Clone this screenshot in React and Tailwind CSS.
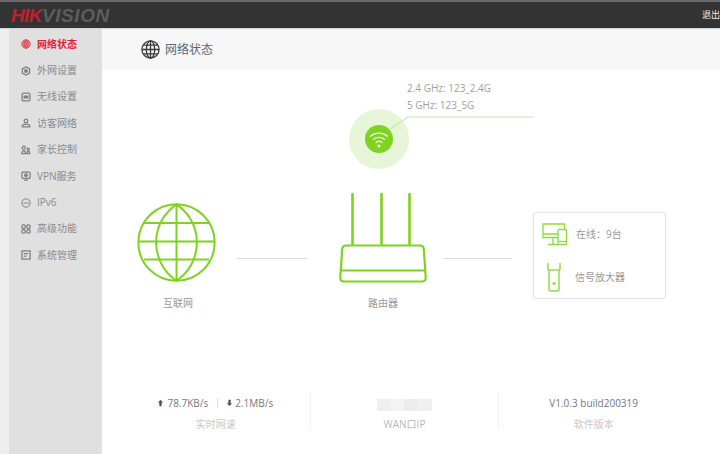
const cjk = { fontFamily: '"Open Sans", "Noto Sans CJK SC", sans-serif' };

const GREEN = "#7ed321";

function SideIcon({ name, color }) {
  const props = { fill: "none", stroke: color, strokeWidth: 1.4 };
  return (
    <svg width="10" height="10" viewBox="0 0 11 11" className="shrink-0">
      {name === "globe" && (
        <g {...props} strokeWidth="1.1">
          <circle cx="5.5" cy="5.5" r="4.6" />
          <ellipse cx="5.5" cy="5.5" rx="2.2" ry="4.6" />
          <path d="M1 5.5h9M1.6 3.3h7.8M1.6 7.7h7.8M5.5 1v9" />
        </g>
      )}
      {name === "wan" && (
        <g {...props}>
          <path d="M5.5 1l4 2.2v4.6l-4 2.2-4-2.2V3.2z" />
          <circle cx="5.5" cy="5.5" r="1.5" fill={color} />
        </g>
      )}
      {name === "wifi" && (
        <g {...props}>
          <rect x="1.2" y="1.2" width="8.6" height="8.6" rx="1.5" />
          <path d="M3.5 4.5h4v2h-4z" fill={color} />
        </g>
      )}
      {name === "guest" && (
        <g {...props}>
          <circle cx="5.5" cy="3.3" r="2" />
          <path d="M1.2 9.8c0-2.2 1.6-3 4.3-3s4.3.8 4.3 3z" />
        </g>
      )}
      {name === "parent" && (
        <g {...props}>
          <circle cx="3" cy="3" r="1.7" />
          <path d="M.9 9.6c0-2 .6-3.2 2.1-3.2s2.1 1.2 2.1 3.2z" />
          <circle cx="8" cy="4.6" r="1.2" />
          <path d="M6.4 9.6c0-1.6.4-2.6 1.6-2.6s1.6 1 1.6 2.6z" />
        </g>
      )}
      {name === "vpn" && (
        <g {...props}>
          <rect x="1" y="1.2" width="9" height="7" rx="1" />
          <circle cx="5.5" cy="4.6" r="1.4" fill={color} />
          <path d="M3.5 10h4" />
        </g>
      )}
      {name === "ipv6" && (
        <g {...props} strokeWidth="1.1">
          <circle cx="5.5" cy="5.5" r="4.6" />
          <path d="M2.6 5.5h5.8" />
        </g>
      )}
      {name === "grid" && (
        <g {...props}>
          <rect x="1" y="1" width="3.6" height="3.8" rx="1.2" />
          <rect x="6.4" y="1" width="3.6" height="3.8" rx="1.2" />
          <rect x="1" y="6.2" width="3.6" height="3.8" rx="1.2" />
          <rect x="6.4" y="6.2" width="3.6" height="3.8" rx="1.2" />
        </g>
      )}
      {name === "sys" && (
        <g {...props}>
          <rect x="1" y="1" width="9" height="9" />
          <path d="M3 4h5M3 6.8h3" />
        </g>
      )}
    </svg>
  );
}

const menu = [
  { icon: "globe", label: "网络状态", active: true },
  { icon: "wan", label: "外网设置" },
  { icon: "wifi", label: "无线设置" },
  { icon: "guest", label: "访客网络" },
  { icon: "parent", label: "家长控制" },
  { icon: "vpn", label: "VPN服务" },
  { icon: "ipv6", label: "IPv6" },
  { icon: "grid", label: "高级功能" },
  { icon: "sys", label: "系统管理" },
];

function WifiBadge() {
  return (
    <svg width="186" height="62" viewBox="0 0 186 62" className="block">
      <circle cx="30" cy="30" r="30" fill="#e7f5d8" />
      <path d="M41 20 L59 8 H185" fill="none" stroke="#cde5a6" strokeWidth="1.2" />
      <circle cx="30" cy="30" r="14" fill={GREEN} />
      <g fill="none" stroke="#fff" strokeWidth="1.3" strokeLinecap="round" opacity="0.9">
        <path d="M21.5 27.2c4.8-4 12.2-4 17 0" />
        <path d="M24.4 30.4c3.2-2.6 8-2.6 11.2 0" />
        <path d="M27 33.4c1.7-1.3 4.3-1.3 6 0" />
      </g>
      <circle cx="30" cy="37" r="1.5" fill="#fff" />
    </svg>
  );
}

function Globe() {
  return (
    <svg width="80" height="80" viewBox="0 0 80 80" className="block">
      <g fill="none" stroke={GREEN} strokeWidth="2">
        <circle cx="39.5" cy="39.5" r="38.2" />
        <path d="M39.5 1.3A46 46 0 0 0 39.5 77.7A46 46 0 0 0 39.5 1.3z" />
        <path d="M39.5 1.3V77.7M7 20h65M1.3 38.5h76.4M7 56.5h65" />
      </g>
    </svg>
  );
}

function Router() {
  return (
    <svg width="88" height="92" viewBox="0 0 88 92" className="block">
      <g fill="none" stroke={GREEN} strokeLinecap="round" strokeLinejoin="round">
        <path d="M13.5 2V52M42.5 2V52M70.5 2V52" strokeWidth="2.6" />
        <path
          d="M7 53.5Q3.5 53.5 3.2 57L1.3 85.5Q1.2 89.5 5 89.5H83Q86.8 89.5 86.7 85.5L84.8 57Q84.5 53.5 81 53.5z"
          strokeWidth="2.2"
        />
        <path d="M1.8 78.5H86.2" strokeWidth="2" />
      </g>
    </svg>
  );
}

function Devices() {
  return (
    <svg width="26" height="23" viewBox="0 0 26 23" className="block shrink-0">
      <g fill="none" stroke="#8edb3c" strokeWidth="1.3">
        <path d="M16 14.5H1V1h21.5v5" />
        <path d="M1 11h15M11 15v6M6 21.5h10" />
        <rect x="16" y="6.5" width="8.5" height="15" rx="1" />
        <path d="M16 18.5h8.5" />
      </g>
    </svg>
  );
}

function Extender() {
  return (
    <svg width="14" height="29" viewBox="0 0 14 29" className="block shrink-0">
      <g fill="none" stroke="#8edb3c" strokeWidth="1.4">
        <path d="M1 0V7M13 0V7" />
        <path d="M1 7H13" />
        <path d="M2 7V26Q2 28 4 28H10Q12 28 12 26V7" />
      </g>
      <circle cx="7" cy="20.5" r="1.6" fill="#8edb3c" />
    </svg>
  );
}

function Arrow({ down }) {
  return (
    <svg width="5" height="8" viewBox="0 0 6 8" className={down ? "rotate-180" : ""}>
      <path d="M3 0L6 3.6H4.4V8H1.6V3.6H0z" fill="#555" />
    </svg>
  );
}

export default function App() {
  return (
    <div className="flex h-[454px] w-[720px] flex-col overflow-hidden bg-white" style={cjk}>
      {/* top bar */}
      <div className="flex h-[28px] shrink-0 items-center border-t-2 border-[#6a6a6a] bg-[#333333] pl-[11px]">
        <div
          className="text-[19px] font-bold italic leading-none tracking-[-0.6px]"
          style={{ fontFamily: '"Liberation Sans", sans-serif' }}
        >
          <span className="text-[#c41f2c]">HIK</span>
          <span className="tracking-[0.6px] text-[#5d5d5f]">VISION</span>
        </div>
        <span className="ml-auto shrink-0 text-[9px] text-[#f0f0f0]">退出</span>
      </div>

      <div className="flex min-h-0 flex-1 border-t border-[#d4d4d4]">
        {/* sidebar */}
        <div className="w-[9px] shrink-0 bg-[#eeeeee]" />
        <div className="w-[93px] shrink-0 bg-[#e0e0e0] pt-[2px]">
          {menu.map((m) => (
            <div key={m.label} className="flex h-[26.4px] items-center gap-[6px] pl-[12px]">
              <SideIcon name={m.icon} color={m.active ? "#e0404a" : "#808080"} />
              <span className={`text-[10px] ${m.active ? "font-semibold text-[#e2232e]" : "text-[#8a8a8a]"}`}>
                {m.label}
              </span>
            </div>
          ))}
        </div>

        {/* main */}
        <div className="min-w-0 flex-1">
          <div className="flex h-[41px] items-center gap-[5px] bg-[#f7f7f7] pl-[39px]">
            <svg width="19" height="19" viewBox="0 0 19 19">
              <g fill="none" stroke="#3a3a3a" strokeWidth="1.3">
                <circle cx="9.5" cy="9.5" r="8.6" />
                <ellipse cx="9.5" cy="9.5" rx="4.2" ry="8.6" />
                <path d="M1 9.5h17M2.2 5.2h14.6M2.2 13.8h14.6M9.5 1v17" />
              </g>
            </svg>
            <span className="text-[12px] text-[#5a6670]">网络状态</span>
          </div>

          {/* wifi */}
          <div className="ml-[247px] w-[186px] pt-[10px]">
            <div className="pl-[58px] text-[10px] leading-[17px] text-[#a0a0a0]">
              <div>2.4 GHz: 123_2.4G</div>
              <div>5 GHz: 123_5G</div>
            </div>
            <div className="-mt-[5px]">
              <WifiBadge />
            </div>
          </div>

          {/* topology */}
          <div className="mt-[21px] flex items-start pl-[35px]">
            <div className="mt-[11px] w-[82px] text-center text-[10px] text-[#999999]">
              <Globe />
              <div className="mt-[13px]">互联网</div>
            </div>
            <div className="ml-[18px] mt-[66px] h-px w-[70px] bg-[#dddddd]" />
            <div className="ml-[32px] w-[88px] text-center text-[10px] text-[#999999]">
              <Router />
              <div className="mt-[12px]">路由器</div>
            </div>
            <div className="ml-[16px] mt-[66px] h-px w-[69px] bg-[#dddddd]" />
            <div className="ml-[21px] mt-[20px] flex h-[87px] w-[133px] flex-col gap-[17px] rounded-[3px] border border-[#e3e3e3] pl-[8px] pt-[10px] text-[10px] text-[#999999] shadow-[0_0_2px_rgba(0,0,0,0.06)]">
              <div className="flex h-[23px] items-center gap-[8px]">
                <Devices />
                <span>在线：9台</span>
              </div>
              <div className="flex h-[29px] items-center">
                <div className="ml-[5px] mr-[14px]">
                  <Extender />
                </div>
                <span>信号放大器</span>
              </div>
            </div>
          </div>

          {/* stats */}
          <div className="ml-[20px] mt-[81px] grid w-[566px] grid-cols-3 text-center">
            <div className="h-[36px] border-r border-[#f0f0f0] pt-[3px]">
              <div className="flex h-[16px] items-center justify-center text-[10px] text-[#777777]">
                <Arrow />
                <span className="ml-[4px]">78.7KB/s</span>
                <span className="mx-[9px] h-[10px] w-px bg-[#dddddd]" />
                <Arrow down />
                <span className="ml-[3px]">2.1MB/s</span>
              </div>
              <div className="mt-[7px] text-[10px] leading-[12px] text-[#c8c8c8]">实时网速</div>
            </div>
            <div className="h-[36px] border-r border-[#f0f0f0] pt-[3px]">
              <div className="flex h-[16px] items-end justify-center">
                <div className="flex h-[12px] w-[55px]">
                  <div className="flex-1 bg-[#efefef]" />
                  <div className="flex-1 bg-[#f4f4f4]" />
                  <div className="flex-1 bg-[#ececec]" />
                  <div className="flex-1 bg-[#f0f0f0]" />
                </div>
              </div>
              <div className="mt-[7px] text-[10px] leading-[12px] text-[#b8b8b8]">WAN口IP</div>
            </div>
            <div className="h-[36px] pt-[3px]">
              <div className="flex h-[16px] items-center justify-center text-[10px] text-[#777777]">
                V1.0.3 build200319
              </div>
              <div className="mt-[7px] text-[10px] leading-[12px] text-[#c8c8c8]">软件版本</div>
            </div>
          </div>
        </div>
      </div>
    </div>
  );
}
